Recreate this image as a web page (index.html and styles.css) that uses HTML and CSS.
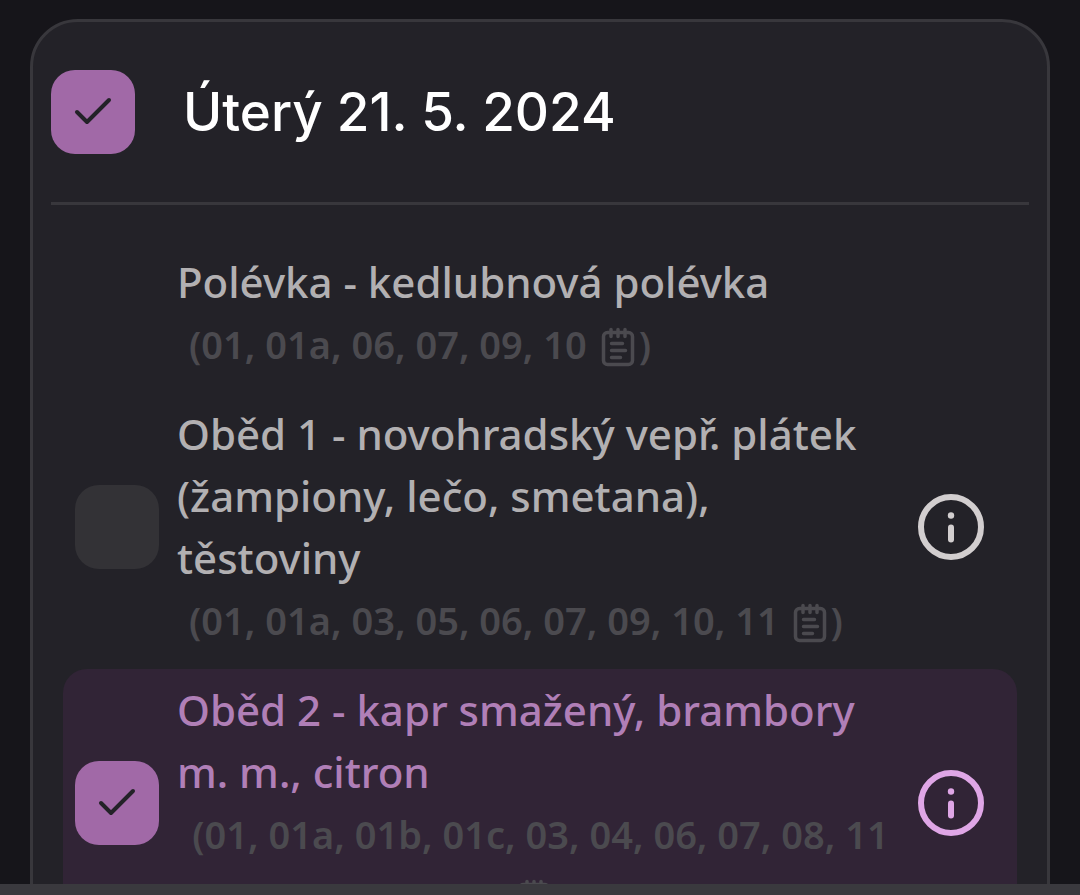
FILE: index.html
```html
<!DOCTYPE html>
<html lang="cs">
<head>
    <meta charset="utf-8">
    <meta name="viewport" content="width=device-width, initial-scale=1">
    <title>Jídelníček</title>
    <link rel="stylesheet" href="styles.css">
</head>
<body>
    <svg class="sprite" aria-hidden="true">
        <symbol id="check" viewBox="0 0 84 84">
            <path d="M26 42l10 10 22-22" fill="none" stroke="currentColor" stroke-width="4" stroke-linecap="round" stroke-linejoin="round"/>
        </symbol>
        <symbol id="info" viewBox="0 0 66 66">
            <circle cx="33" cy="33" r="30" fill="none" stroke="currentColor" stroke-width="6"/>
            <circle cx="33" cy="21.500" r="3.200" fill="currentColor"/>
            <path d="M33 33.500v12" stroke="currentColor" stroke-width="6" stroke-linecap="round"/>
        </symbol>
        <symbol id="notes" viewBox="0 0 34 40">
            <g fill="none" stroke="currentColor" stroke-width="3.500" stroke-linecap="round">
                <rect x="2.500" y="5.500" width="29" height="32" rx="4"/>
                <path d="M10 2.500v7M17 2.500v7M24 2.500v7M10.500 16.500h11M10.500 23.500h14M10.500 30.500h9"/>
            </g>
        </symbol>
    </svg>

    <main class="content">
        <section class="card">
            <header class="card-header">
                <span class="check">
                    <input type="checkbox" id="den" checked>
                    <svg><use href="#check"/></svg>
                </span>
                <h1><label for="den">Úterý 21. 5. 2024</label></h1>
            </header>

            <ul class="menu">
                <li class="meal">
                    <span class="spacer"></span>
                    <div class="text">
                        <span class="name">Polévka - kedlubnová polévka</span>
                        <span class="allergens">(01, 01a, 06, 07, 09, 10 <svg class="notes"><use href="#notes"/></svg>)</span>
                    </div>
                </li>
                <li class="meal">
                    <span class="check">
                        <input type="checkbox" id="obed1">
                        <svg><use href="#check"/></svg>
                    </span>
                    <div class="text">
                        <label class="name" for="obed1">Oběd 1 - novohradský vepř. plátek (žampiony, lečo, smetana), těstoviny</label>
                        <span class="allergens">(01, 01a, 03, 05, 06, 07, 09, 10, 11 <svg class="notes"><use href="#notes"/></svg>)</span>
                    </div>
                    <button class="info" type="button" aria-label="Informace o obědu 1"><svg><use href="#info"/></svg></button>
                </li>
                <li class="meal selected">
                    <span class="check">
                        <input type="checkbox" id="obed2" checked>
                        <svg><use href="#check"/></svg>
                    </span>
                    <div class="text">
                        <label class="name" for="obed2">Oběd 2 - kapr smažený, brambory m. m., citron</label>
                        <span class="allergens">(01, 01a, 01b, 01c, 03, 04, 06, 07, 08, 11 <svg class="notes"><use href="#notes"/></svg>)</span>
                    </div>
                    <button class="info" type="button" aria-label="Informace o obědu 2"><svg><use href="#info"/></svg></button>
                </li>
            </ul>
        </section>
    </main>
    <footer class="bottom-bar"></footer>
</body>
</html>
```

FILE: styles.css
```css
* {
    box-sizing: border-box;
}
body {
    font-family: "Noto Sans", "Open Sans", sans-serif;
    background-color: #16151a;
    color: #b2b0b2;
    margin: 0;
    height: 100vh;
    display: flex;
    flex-direction: column;
}
.sprite {
    display: none;
}
.content {
    flex: 1;
    min-height: 0;
    overflow: hidden;
    padding: 19px 30px 0;
}
.card {
    background-color: #232228;
    border: 3px solid #38373c;
    border-radius: 48px;
    padding: 0 18px 36px;
}
.card-header {
    display: flex;
    align-items: center;
    gap: 48px;
    padding: 48px 0;
    border-bottom: 3px solid #38373c;
}
h1 {
    font-family: Inter, sans-serif;
    font-size: 53px;
    font-weight: 500;
    line-height: 84px;
    color: #fff;
    margin: 0;
}
.menu {
    list-style: none;
    margin: 0;
    padding: 36px 12px 0;
    display: flex;
    flex-direction: column;
    gap: 8px;
}
.meal {
    display: flex;
    align-items: center;
    gap: 18px;
    padding: 10px 33px 10px 12px;
    border-radius: 24px;
}
.selected {
    background-color: #312436;
}
.check,
.spacer {
    flex: none;
    width: 84px;
}
.check {
    display: grid;
    height: 84px;
}
.check input,
.check svg {
    grid-area: 1 / 1;
    width: 84px;
    height: 84px;
    margin: 0;
}
.check input {
    appearance: none;
    background-color: #333236;
    border-radius: 24px;
}
.check input:checked {
    background-color: #a169a7;
}
.check svg {
    color: #232228;
    pointer-events: none;
    visibility: hidden;
}
.check input:checked + svg {
    visibility: visible;
}
.text {
    flex: 1;
    line-height: 62px;
}
.name {
    display: block;
    font-size: 42px;
    font-weight: 500;
}
.selected .name {
    color: #b07fb7;
}
.allergens {
    display: table;
    margin: 0 8px 0 12px;
    font-size: 38px;
    font-weight: 600;
    text-align: center;
    color: #4b4a4f;
}
.notes {
    width: 34px;
    height: 40px;
    margin: 0 4px 0 4px;
    vertical-align: -8px;
}
.info {
    flex: none;
    width: 66px;
    height: 66px;
    padding: 0;
    border: 0;
    background: none;
    color: #d2cecf;
    cursor: pointer;
}
.info svg {
    display: block;
    width: 66px;
    height: 66px;
}
.selected .info {
    color: #dfa6e6;
}
.bottom-bar {
    height: 11px;
    background-color: #3a393e;
}
```
